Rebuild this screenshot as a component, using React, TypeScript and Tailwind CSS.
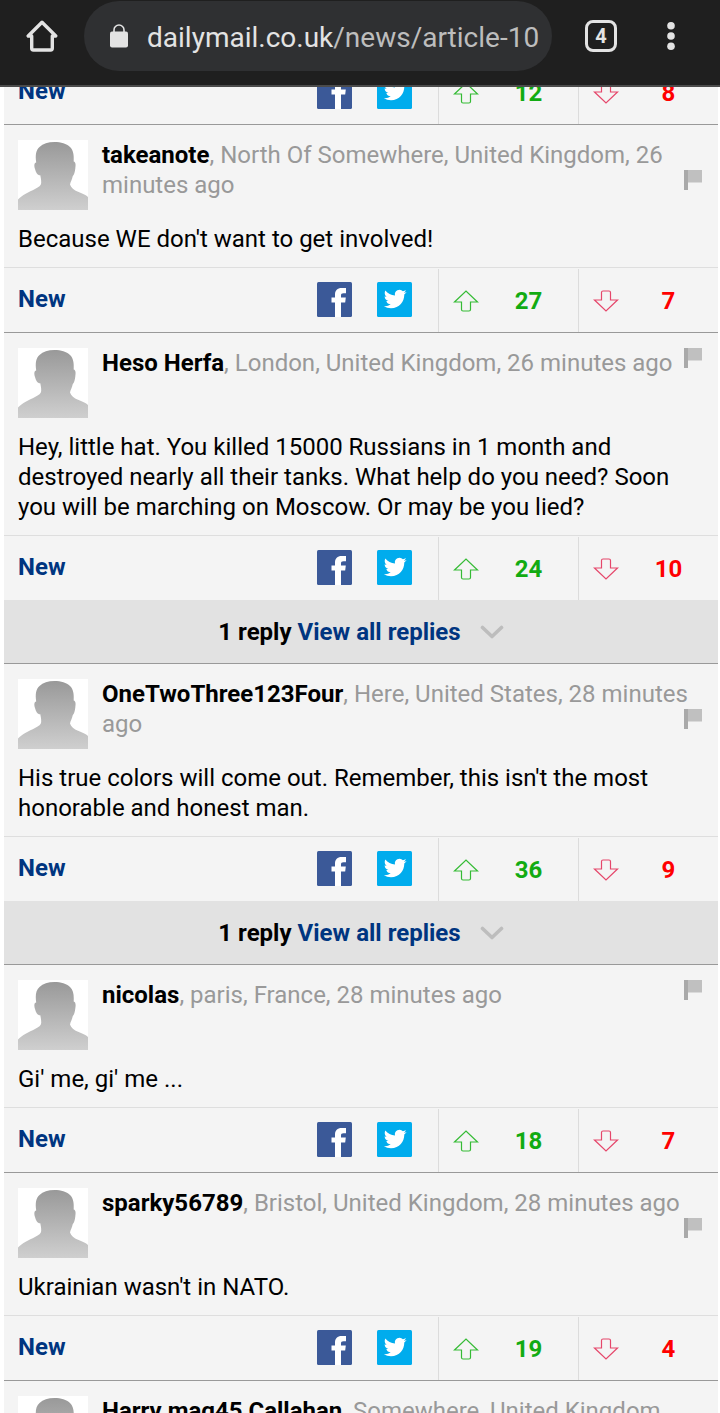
type Comment = {
  id: number;
  author: string;
  details: string;
  body: string;
  up: number;
  down: number;
  replies?: number;
};

const comments: Comment[] = [
  {
    id: 1,
    author: "takeanote",
    details: "North Of Somewhere, United Kingdom, 26 minutes ago",
    body: "Because WE don't want to get involved!",
    up: 27,
    down: 7,
  },
  {
    id: 2,
    author: "Heso Herfa",
    details: "London, United Kingdom, 26 minutes ago",
    body: "Hey, little hat. You killed 15000 Russians in 1 month and destroyed nearly all their tanks. What help do you need? Soon you will be marching on Moscow. Or may be you lied?",
    up: 24,
    down: 10,
    replies: 1,
  },
  {
    id: 3,
    author: "OneTwoThree123Four",
    details: "Here, United States, 28 minutes ago",
    body: "His true colors will come out. Remember, this isn't the most honorable and honest man.",
    up: 36,
    down: 9,
    replies: 1,
  },
  {
    id: 4,
    author: "nicolas",
    details: "paris, France, 28 minutes ago",
    body: "Gi' me, gi' me ...",
    up: 18,
    down: 7,
  },
  {
    id: 5,
    author: "sparky56789",
    details: "Bristol, United Kingdom, 28 minutes ago",
    body: "Ukrainian wasn't in NATO.",
    up: 19,
    down: 4,
  },
];

const BrowserBar = () => (
  <header className="z-10 flex shrink-0 items-start border-b-2 border-[#4b4b4b] bg-[#1f1f1f] pt-px pb-[14px] text-[#e3e3e3]">
    <button aria-label="Home" className="flex h-[70px] w-[84px] shrink-0 items-center justify-center">
      <svg width="32" height="34" viewBox="0 0 32 34" fill="none" className="block">
        <path
          d="M16 3.2 2.2 17H5.700V29.300Q5.700 31 7.400 31H24.600Q26.300 31 26.300 29.300V17H29.800Z"
          stroke="currentColor"
          strokeWidth="3.400"
          strokeLinejoin="round"
        />
      </svg>
    </button>

    <button className="flex h-[70px] min-w-0 flex-1 items-center overflow-hidden rounded-full bg-[#2f3032] pl-[26px] text-left">
      <svg width="18" height="24" viewBox="0 0 18 24" className="shrink-0">
        <path d="M4 10V6a5 5 0 0 1 10 0v4" fill="none" stroke="currentColor" strokeWidth="1.6" />
        <rect y="7.5" width="18" height="16" rx="2" fill="currentColor" />
      </svg>
      <span className="ml-[19px] truncate pt-1 text-[28px] text-[#bdbdbd]">
        <span className="text-[#e3e3e3]">dailymail.co.uk</span>/news/article-10
      </span>
    </button>

    <div className="flex h-[70px] w-[168px] shrink-0 items-center">
      <button
        aria-label="Tabs"
        className="ml-[33px] flex size-8 items-center justify-center rounded-lg border-3 border-current text-xl font-bold"
      >
        4
      </button>
      <button aria-label="Menu" className="ml-[50px]">
        <svg width="8" height="28" viewBox="0 0 8 28" fill="currentColor" className="block">
          <circle cx="4" cy="3.8" r="3.8" />
          <circle cx="4" cy="14" r="3.8" />
          <circle cx="4" cy="24.2" r="3.8" />
        </svg>
      </button>
    </div>
  </header>
);

const Avatar = () => (
  <svg width="70" height="70" viewBox="0 0 70 70" className="shrink-0 bg-white">
    <defs>
      <linearGradient id="avatar-fill" x1="0" y1="0" x2="0" y2="1">
        <stop offset="0" stopColor="#999" />
        <stop offset="1" stopColor="#cfcfcf" />
      </linearGradient>
    </defs>
    <path
      d="M0 70V59.500C4 55 11 52 17 49C21 47 23 45.500 23.200 43C23.300 40 22.800 38 22.300 35.300C19.500 35.500 18 32.500 17 29C15.800 25.500 16.300 22.500 18.200 22.500C17.200 15 17.800 10.500 21.500 7C25 3.500 30 2 36.500 2C43 2 48.500 3.500 52 7C55.500 10.500 56 15 55.700 21.500C58 22 57.800 25.500 57.300 28.500C56.800 32 56.300 34.500 54.800 36C54 39.500 52.500 42 52 44.500C53 48 56 50 60 51.800C64 53.500 68 55 70 57V70Z"
      fill="url(#avatar-fill)"
    />
  </svg>
);

const Flag = () => (
  <button aria-label="Report abuse" className="float-right ml-2">
    <svg width="18" height="20" viewBox="0 0 18 20" className="block">
      <rect x="3" width="15" height="12.500" fill="#c0c0c0" />
      <rect width="4" height="20" fill="#a9a9a9" />
    </svg>
  </button>
);

const FacebookIcon = () => (
  <svg width="35" height="35" viewBox="0 0 35 35" className="block">
    <rect width="35" height="35" rx="1.500" fill="#3b5998" />
    <path
      d="M18 35V20.500H14.500V15.500H18V12.500C18 8.500 20.500 6 24.500 6H29V11.200H26.500C24.600 11.200 24 12 24 13.500V15.500H28.800L28.200 20.500H24V35Z"
      fill="#fff"
    />
  </svg>
);

const TwitterIcon = () => (
  <svg width="35" height="35" viewBox="0 0 35 35" className="block">
    <rect width="35" height="35" rx="1.500" fill="#00aced" />
    <g transform="translate(6.800 5.600) scale(0.950)">
      <path
        d="M23.950 4.570a10 10 0 0 1-2.820.780 4.960 4.960 0 0 0 2.160-2.730c-.950.560-2 .960-3.130 1.190a4.920 4.920 0 0 0-8.380 4.480C7.690 8.100 4.070 6.130 1.640 3.160a4.820 4.820 0 0 0-.670 2.480c0 1.710.870 3.210 2.190 4.100a4.900 4.900 0 0 1-2.230-.620v.060a4.920 4.920 0 0 0 3.950 4.830 5 5 0 0 1-2.210.080 4.940 4.940 0 0 0 4.600 3.420A9.870 9.870 0 0 1 0 19.540a14 14 0 0 0 7.550 2.210c9.050 0 14-7.500 14-13.980 0-.210 0-.420-.020-.630a9.940 9.940 0 0 0 2.460-2.550z"
        fill="#fff"
      />
    </g>
  </svg>
);

const ArrowIcon = ({ down = false }: { down?: boolean }) => (
  <svg width="26" height="22" viewBox="0 0 26 22" fill="none" className="shrink-0">
    <path
      d={
        down
          ? "M8.500 10V2.500Q8.500 1 10 1H16Q17.500 1 17.500 2.500V10H24.500L13 21L1.500 10Z"
          : "M8.500 12V19.500Q8.500 21 10 21H16Q17.500 21 17.500 19.500V12H24.500L13 1L1.500 12Z"
      }
      stroke={down ? "#e5476b" : "#35bb35"}
      strokeWidth="1.200"
    />
  </svg>
);

const Actions = ({ up, down }: { up: number; down: number }) => (
  <div className="flex h-16 items-stretch font-bold">
    <div className="flex flex-1 items-center pr-[26px] pb-[2px] pl-[14px]">
      <button className="mr-auto text-[#003580]">New</button>
      <button aria-label="Share on Facebook">
        <FacebookIcon />
      </button>
      <button aria-label="Share on Twitter" className="ml-[25px]">
        <TwitterIcon />
      </button>
    </div>
    <button
      aria-label={`Vote up, ${up}`}
      className="mt-px flex w-[140px] items-center border-l border-[#dcdcdc] pl-[14px] text-[#12ab12]"
    >
      <ArrowIcon />
      <span className="flex-1">{up}</span>
    </button>
    <button
      aria-label={`Vote down, ${down}`}
      className="mt-px flex w-[140px] items-center border-l border-[#dcdcdc] pl-[14px] text-[#ff0000]"
    >
      <ArrowIcon down />
      <span className="flex-1">{down}</span>
    </button>
  </div>
);

const CommentHeader = ({ author, details }: { author: string; details: string }) => (
  <div className="flex pt-[15px] pr-4 pl-[14px]">
    <Avatar />
    <div className="ml-[14px] min-w-0 flex-1 leading-[30px] text-[#999999]">
      <span className="font-bold text-black">{author}</span>, {details}
      <Flag />
    </div>
  </div>
);

const CommentItem = ({ comment }: { comment: Comment }) => (
  <article className="border-b border-[#999999]">
    <CommentHeader author={comment.author} details={comment.details} />
    <p className="px-[14px] pt-[14px] pb-[13px] leading-[30px] text-black">
      {comment.body}
    </p>
    <div className="border-t border-[#dedede]">
      <Actions up={comment.up} down={comment.down} />
    </div>
    {comment.replies ? (
      <div className="flex h-[63px] items-center justify-center bg-[#e2e2e2] font-bold">
        <span>{comment.replies} reply</span>
        <button className="ml-[6px] flex items-center text-[#003580]">
          View all replies
          <svg width="24" height="16" viewBox="0 0 24 16" fill="none" className="ml-[19px]">
            <path
              d="M2.500 3.500 12 12.500 21.500 3.500"
              stroke="#bdbdbd"
              strokeWidth="3.600"
              strokeLinecap="round"
              strokeLinejoin="round"
            />
          </svg>
        </button>
      </div>
    ) : null}
  </article>
);

export default function App() {
  return (
    <div className="flex h-screen flex-col overflow-hidden bg-white font-[Roboto,sans-serif]">
      <BrowserBar />
      {/* The list is scrolled, so its first row is partly under the bar */}
      <main className="-mt-[27px] mr-[2px] ml-1 min-h-0 flex-1 overflow-hidden bg-[#f4f4f4] text-2xl">
        <div className="border-b border-[#999999]">
          <Actions up={12} down={8} />
        </div>
        {comments.map((comment) => (
          <CommentItem key={comment.id} comment={comment} />
        ))}
        <article>
          <CommentHeader
            author="Harry mag45 Callahan"
            details={"Somewhere, United Kingdom, 28\u00a0minutes ago"}
          />
        </article>
      </main>
    </div>
  );
}
